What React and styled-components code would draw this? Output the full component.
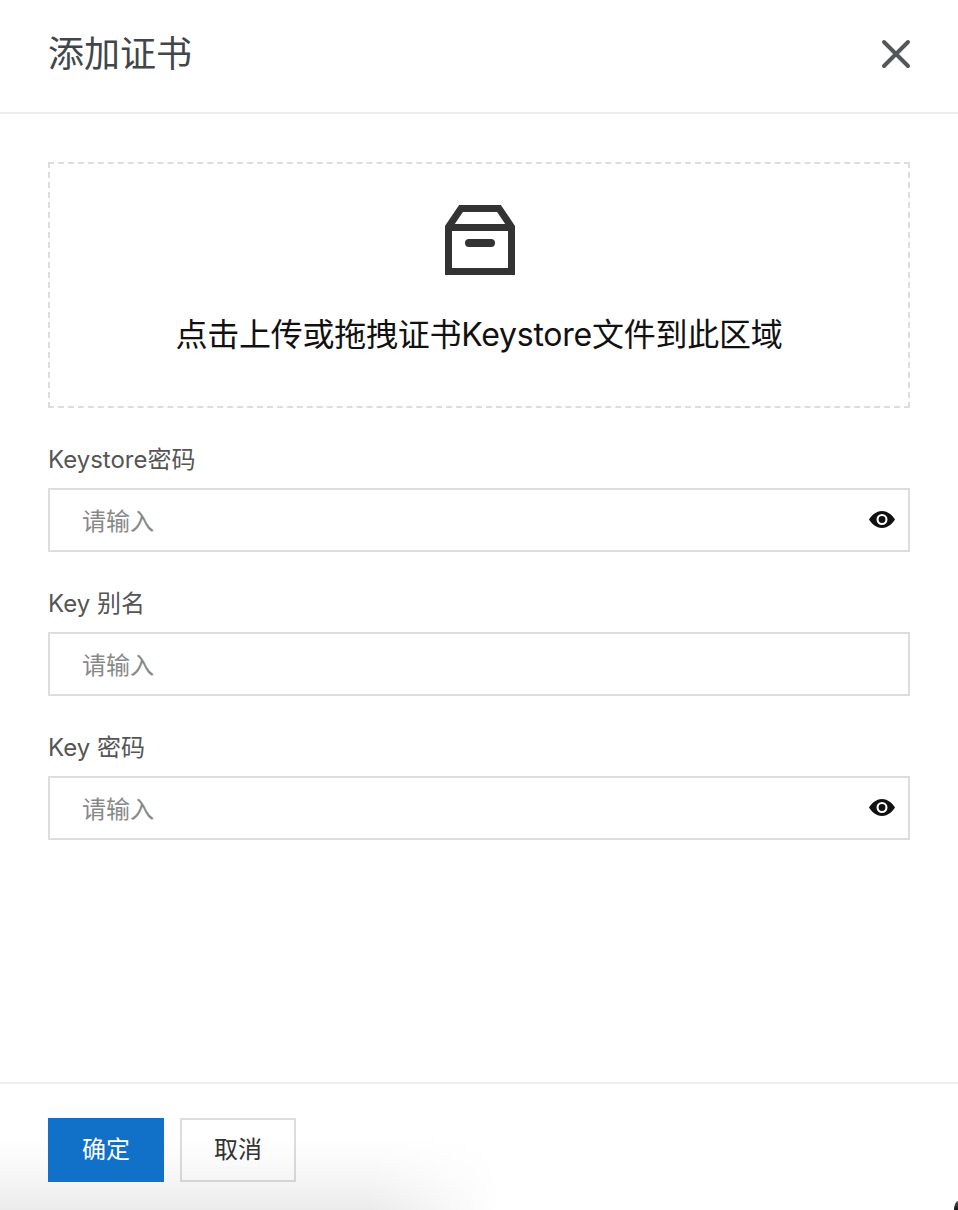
import React from 'react'
import styled, { createGlobalStyle } from 'styled-components'

const GlobalStyle = createGlobalStyle`
  html, body {
    margin: 0;
    padding: 0;
    background: #fff;
  }
  * {
    box-sizing: border-box;
  }
`

const FONT = `Inter, "Noto Sans CJK SC", sans-serif`

const Dialog = styled.div`
  position: relative;
  width: 958px;
  height: 1210px;
  display: flex;
  flex-direction: column;
  background: #fff;
  overflow: hidden;
  font-family: ${FONT};
`

const Header = styled.header`
  height: 114px;
  flex: none;
  display: flex;
  align-items: center;
  justify-content: space-between;
  padding: 0 47px 4px 48px;
  border-bottom: 2px solid #eeeeee;
`

const Title = styled.h1`
  margin: 0;
  font-size: 36px;
  font-weight: 400;
  line-height: 50px;
  color: #41464b;
`

const CloseButton = styled.button`
  width: 30px;
  height: 30px;
  padding: 0;
  border: 0;
  background: none;
  display: flex;
  color: #54575a;
`

const Body = styled.main`
  flex: 1;
  display: flex;
  flex-direction: column;
  padding: 48px 48px 0;
`

const Dropzone = styled.div`
  height: 246px;
  display: flex;
  flex-direction: column;
  align-items: center;
  padding-top: 39px;
  border: 2px dashed #dddddd;
  color: #333;
`

const DropText = styled.p`
  margin: 39px 0 0;
  font-size: 32px;
  letter-spacing: -0.25px;
  line-height: 42px;
  color: #111;
`

const Field = styled.div`
  margin-top: 35px;
`

const Label = styled.label`
  display: block;
  font-size: 24px;
  line-height: 34px;
  color: #555;
`

const InputBox = styled.div`
  height: 64px;
  margin-top: 11px;
  display: flex;
  align-items: center;
  justify-content: space-between;
  padding: 0 12px 0 32px;
  border: 2px solid #dddddd;
  color: #111;
`

const Input = styled.input`
  flex: 1;
  min-width: 0;
  border: 0;
  outline: 0;
  padding: 3px 0 0;
  background: none;
  font-family: ${FONT};
  font-size: 24px;
  line-height: 34px;
  color: #333;
  &::placeholder {
    color: #888;
    opacity: 1;
  }
`

const Footer = styled.footer`
  height: 128px;
  flex: none;
  display: flex;
  align-items: flex-start;
  gap: 16px;
  padding: 34px 48px 0;
  border-top: 2px solid #eeeeee;
`

const Button = styled.button`
  position: relative;
  z-index: ${p => (p.$primary ? 1 : 0)};
  width: 116px;
  height: 64px;
  padding: 0 0 5px;
  font-family: ${FONT};
  font-size: 24px;
  color: ${p => (p.$primary ? '#fff' : '#333')};
  background: ${p => (p.$primary ? '#1170c7' : 'transparent')};
  border: ${p => (p.$primary ? '0' : '2px solid #dddddd')};
`

/* soft grey shadow bleeding in from the bottom left of the screenshot */
const BottomShade = styled.div`
  position: absolute;
  left: 0;
  bottom: 0;
  width: 500px;
  height: 74px;
  pointer-events: none;
  background: linear-gradient(to top, rgba(0, 0, 0, 0.08) 0%, rgba(0, 0, 0, 0.045) 35%, rgba(0, 0, 0, 0.015) 70%, transparent 100%);
  mask-image: linear-gradient(to right, #000 74%, transparent 100%);
`

const Corner = styled.div`
  position: absolute;
  right: 0;
  bottom: 0;
  width: 4px;
  height: 9px;
  background: linear-gradient(#555, #111);
  border-top-left-radius: 100% 100%;
`

const BoxIcon = () => (
  <svg width="72" height="72" viewBox="0 0 72 72" fill="none" stroke="currentColor" strokeWidth="7" strokeLinejoin="miter">
    <path d="M5.500 24L18 5.500H56L68.500 24V68.500H5.500Z" />
    <path d="M5.500 24.500H68.500" />
    <path d="M26 40H48" strokeWidth="8" strokeLinecap="round" />
  </svg>
)

const EyeIcon = () => (
  <svg width="28" height="28" viewBox="0 0.5 28 28">
    <path
      fill="currentColor"
      fillRule="evenodd"
      d="M14 5.500C8 5.500 3.500 10 1 14c2.500 4 7 8.500 13 8.500S24.500 18 27 14c-2.500-4-7-8.500-13-8.500ZM14 8.500a5.500 5.500 0 1 1 0 11 5.500 5.500 0 0 1 0-11Z"
    />
    <circle cx="14" cy="14" r="3.400" fill="currentColor" />
  </svg>
)

const CloseIcon = () => (
  <svg width="30" height="30" viewBox="0 0 30 30" fill="none" stroke="currentColor" strokeWidth="4" strokeLinecap="round">
    <path d="M3 3L27 27M27 3L3 27" />
  </svg>
)

const fields = [
  { label: 'Keystore密码', secret: true },
  { label: 'Key 别名' },
  { label: 'Key 密码', secret: true },
]

export default function App() {
  return (
    <>
      <GlobalStyle />
      <Dialog>
        <Header>
          <Title>添加证书</Title>
          <CloseButton aria-label="关闭">
            <CloseIcon />
          </CloseButton>
        </Header>
        <Body>
          <Dropzone>
            <BoxIcon />
            <DropText>点击上传或拖拽证书Keystore文件到此区域</DropText>
          </Dropzone>
          {fields.map(field => (
            <Field key={field.label}>
              <Label>{field.label}</Label>
              <InputBox>
                <Input placeholder="请输入" type={field.secret ? 'password' : 'text'} />
                {field.secret && <EyeIcon />}
              </InputBox>
            </Field>
          ))}
        </Body>
        <Footer>
          <Button $primary>确定</Button>
          <Button>取消</Button>
        </Footer>
        <BottomShade />
        <Corner />
      </Dialog>
    </>
  )
}
